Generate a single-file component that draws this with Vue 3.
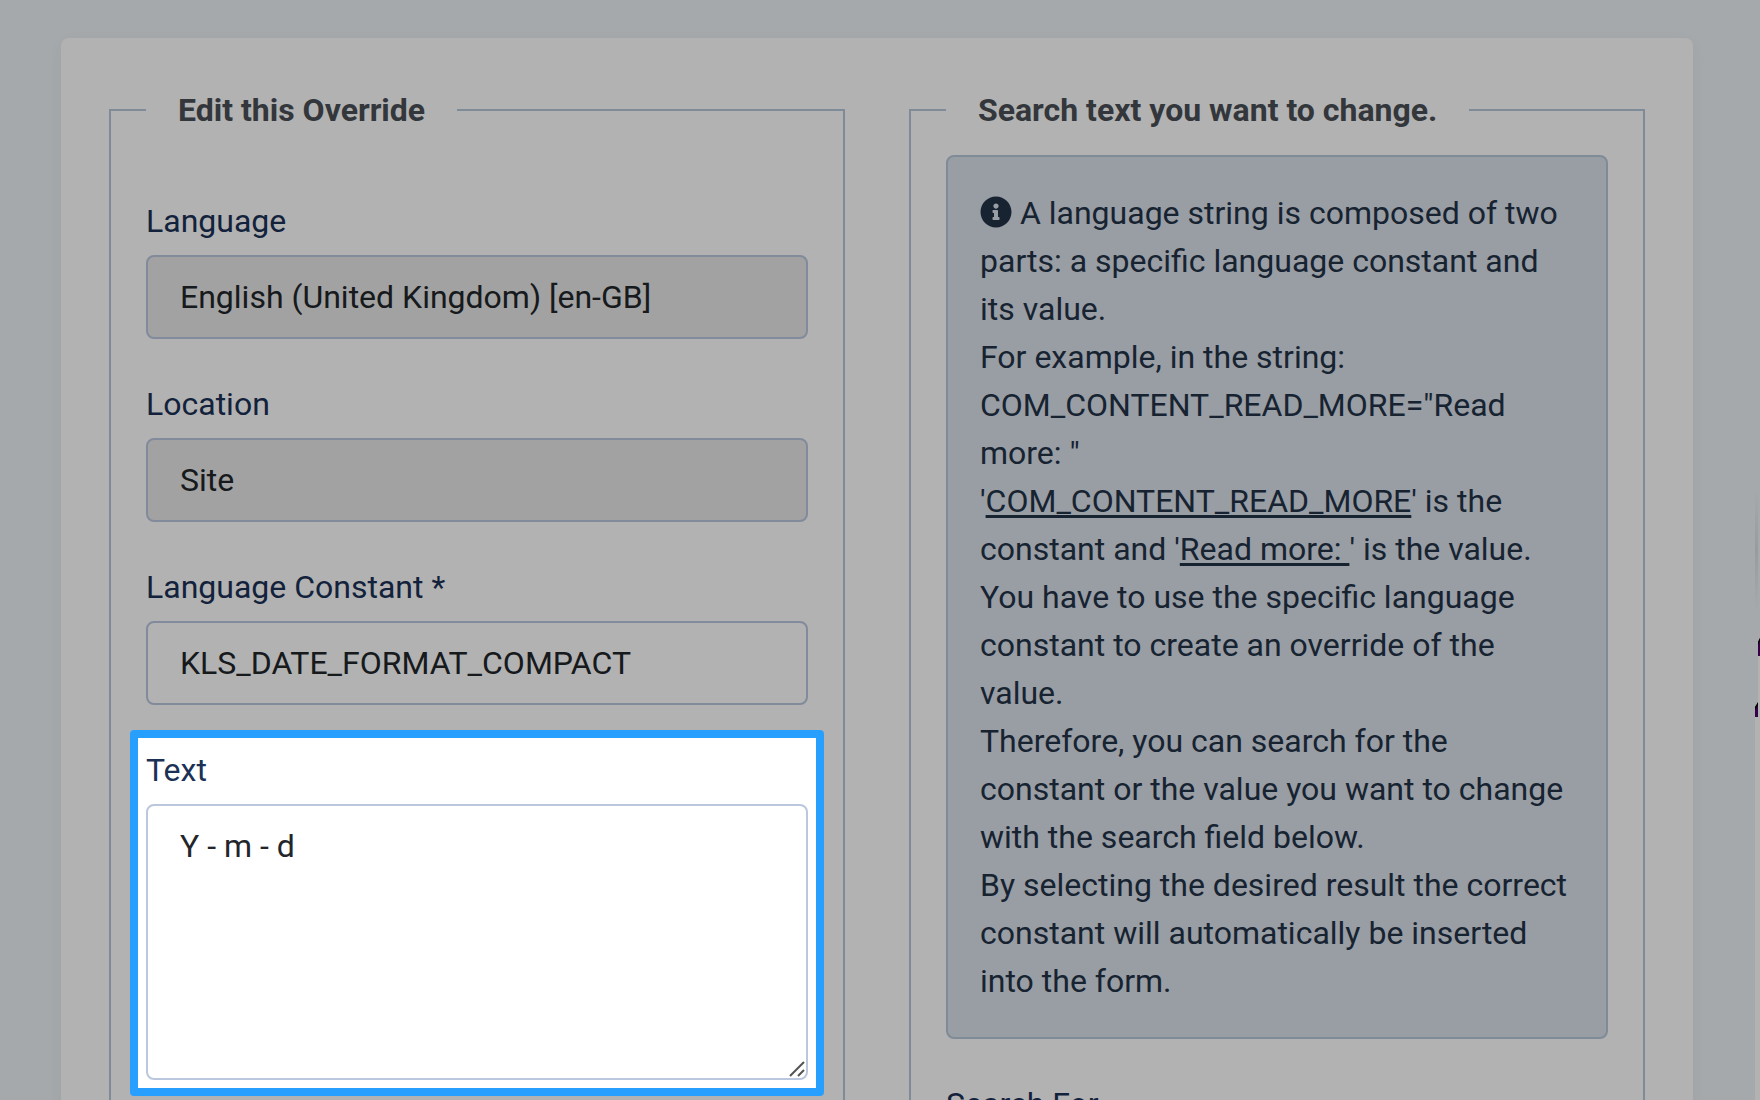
<script setup>
import { ref } from 'vue'

const language = ref('English (United Kingdom) [en-GB]')
const location = ref('Site')
const constant = ref('KLS_DATE_FORMAT_COMPACT')
const text = ref('Y - m - d')
const search = ref('')
</script>

<template>
  <div class="page">
    <main class="card">
      <fieldset class="panel panel-edit">
        <legend>Edit this Override</legend>
        <div class="group">
          <label for="language">Language</label>
          <input id="language" v-model="language" type="text" readonly />
        </div>
        <div class="group">
          <label for="location">Location</label>
          <input id="location" v-model="location" type="text" readonly />
        </div>
        <div class="group">
          <label for="constant">Language Constant *</label>
          <input id="constant" v-model="constant" type="text" required />
        </div>
        <div class="group spotlight">
          <label for="text">Text</label>
          <div class="area">
            <textarea id="text" v-model="text" spellcheck="false"></textarea>
            <svg class="grip" viewBox="0 0 16 16" aria-hidden="true">
              <path d="M1 15 15 1M9 15l6-6" />
            </svg>
          </div>
        </div>
      </fieldset>

      <fieldset class="panel">
        <legend>Search text you want to change.</legend>
        <div class="alert">
          <svg class="info" viewBox="0 0 512 512" aria-hidden="true">
            <path d="M256 8C119 8 8 119 8 256s111 248 248 248 248-111 248-248S393 8 256 8zm0 110c23 0 42 19 42 42s-19 42-42 42-42-19-42-42 19-42 42-42zm56 254c0 7-5 12-12 12h-88c-7 0-12-5-12-12v-24c0-7 5-12 12-12h12v-64h-12c-7 0-12-5-12-12v-24c0-7 5-12 12-12h64c7 0 12 5 12 12v100h12c7 0 12 5 12 12v24z" />
          </svg>
          A language string is composed of two parts: a specific language constant and its value.<br />
          For example, in the string: COM_CONTENT_READ_MORE="Read more: "<br />
          '<u>COM_CONTENT_READ_MORE</u>' is the constant and '<u>Read more: </u>' is the value.<br />
          You have to use the specific language constant to create an override of the value.<br />
          Therefore, you can search for the constant or the value you want to change with the search field below.<br />
          By selecting the desired result the correct constant will automatically be inserted into the form.
        </div>
        <div class="group">
          <label for="search">Search For</label>
          <input id="search" v-model="search" type="text" />
        </div>
      </fieldset>
    </main>

    <svg class="window-edge" viewBox="0 0 5 1100" aria-hidden="true">
      <defs>
        <linearGradient id="edge-shade" x1="0" y1="0" x2="0" y2="1">
          <stop offset="0" stop-color="#d8dfe5" stop-opacity="0" />
          <stop offset="0.5" stop-color="#d8dfe5" />
          <stop offset="1" stop-color="#d8dfe5" stop-opacity="0" />
        </linearGradient>
      </defs>
      <path d="M3 0h2v640H3z" fill="#f0f1f3" />
      <path d="M0 490h3v120H0z" fill="url(#edge-shade)" />
      <path d="M3 640h2v460H0V717h3z" fill="#fff" />
      <path d="M3 656v-14l2-4v18zM0 717v-10l3-4v14z" fill="#4b0066" />
      <path d="M3 645v-3l2-4v3zM0 710v-3l3-5v3z" fill="#000" />
    </svg>
  </div>
</template>

<style>
body {
  margin: 0;
  overflow: hidden;
}
</style>

<style scoped>
.page {
  position: relative;
  box-sizing: border-box;
  height: 100vh;
  overflow: hidden;
  padding: 38px 67px 0 61px;
  background: #ecf2f5;
  color: #22262a;
  font: 32px/48px Roboto, "Liberation Sans", sans-serif;
}

.card {
  display: grid;
  grid-template-columns: 1fr 1fr;
  gap: 64px;
  padding: 48px;
  border-radius: 8px;
  background: #fff;
  box-shadow: 0 4px 16px rgba(20, 40, 70, 0.04);
}

.panel {
  min-width: 0;
  margin: 0;
  padding: 21px 35px 35px;
  border: 2px solid #b8c7da;
}

.panel-edit {
  padding-top: 63px;
}

legend {
  padding: 0 32px;
  color: #495057;
  font-weight: 700;
}

.group {
  margin-bottom: 41px;
}

label {
  display: block;
  margin-bottom: 10px;
  color: #1b3156;
}

input,
textarea {
  display: block;
  box-sizing: border-box;
  width: 100%;
  height: 84px;
  margin: 0;
  padding: 16px 32px;
  border: 2px solid #bac7de;
  border-radius: 8px;
  outline: 0;
  background: #fff;
  color: #22262a;
  font: inherit;
}

input[readonly] {
  background: #e8e8e8;
}

textarea {
  height: 276px;
  resize: none;
}

.spotlight {
  position: relative;
  z-index: 1;
  margin: -16px;
  padding: 8px;
  border: 8px solid #269fff;
  border-radius: 4px;
  background: #fff;
  background-clip: padding-box;
  box-shadow: 0 0 0 2000px rgba(0, 0, 0, 0.3);
}

.area {
  position: relative;
}

.grip {
  position: absolute;
  right: 3px;
  bottom: 3px;
  width: 16px;
  height: 16px;
  fill: none;
  stroke: #555;
  stroke-width: 2;
  pointer-events: none;
}

.alert {
  margin-bottom: 41px;
  padding: 32px;
  border: 2px solid #b8c7da;
  border-radius: 8px;
  background: #dce1eb;
  color: #233348;
}

.alert u {
  text-decoration-thickness: 3px;
  text-underline-offset: 3px;
  text-decoration-skip-ink: none;
}

.info {
  width: 32px;
  height: 32px;
  vertical-align: -4px;
  fill: currentColor;
}

.window-edge {
  position: absolute;
  top: 0;
  right: 0;
  width: 5px;
  height: 1100px;
}
</style>
